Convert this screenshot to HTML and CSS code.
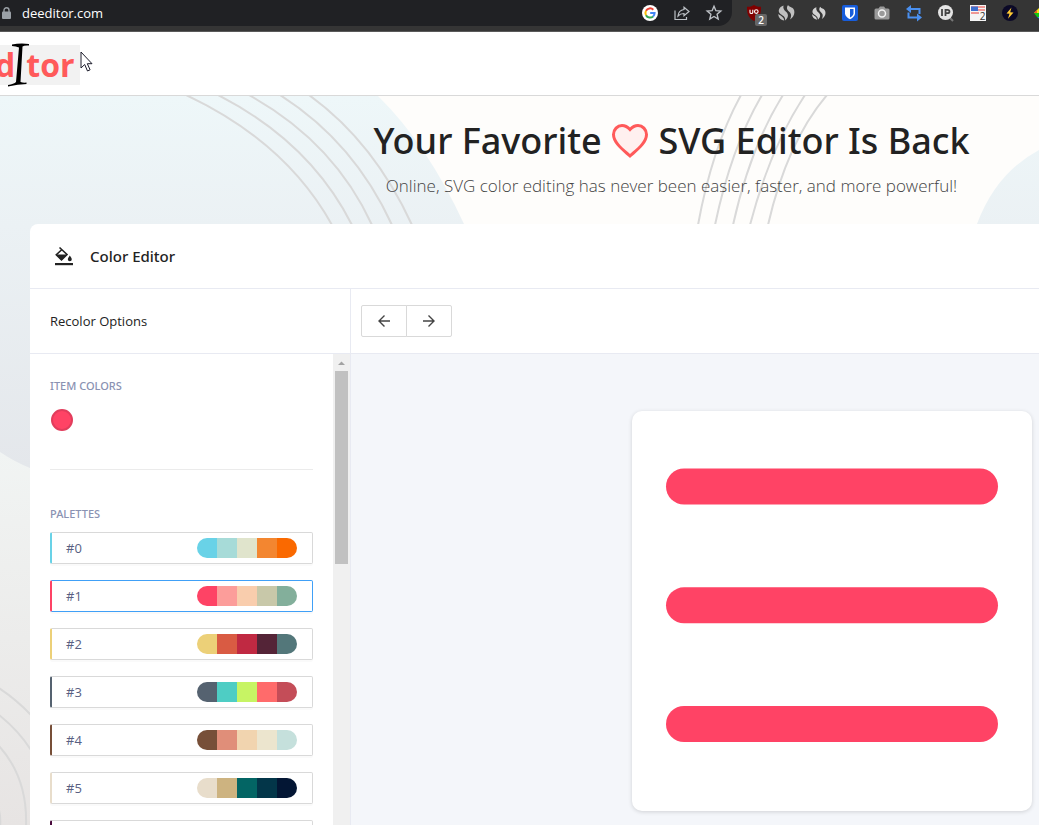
FILE: index.html
```html
<!DOCTYPE html>
<html lang="en">
<head>
<meta charset="utf-8">
<title>Deeditor</title>
<link rel="stylesheet" href="styles.css">
</head>
<body>
<div class="app">
  <div class="browser">
    <div class="omnibox">
      <svg class="lock" width="9" height="12" viewBox="0 0 9 12"><path d="M2 5V3.2a2.5 2.5 0 0 1 5 0V5" fill="none" stroke="#9aa0a6" stroke-width="1.4"/><rect y="4.500" width="9" height="7.500" rx="1" fill="#9aa0a6"/></svg>
      <input class="url" type="text" aria-label="Address" value="deeditor.com">
      <button class="tool" aria-label="Google"><svg width="18" height="18" viewBox="0 0 18 18"><circle cx="9" cy="9" r="8" fill="#fff"/><g fill="none" stroke-width="2"><path d="M12.300 5.700A4.600 4.600 0 0 0 5 6.800" stroke="#ea4335"/><path d="M5 6.800a4.600 4.600 0 0 0 0 4.400" stroke="#fbbc05"/><path d="M5 11.200a4.600 4.600 0 0 0 7.100 1.200" stroke="#34a853"/><path d="M12.100 12.400A4.600 4.600 0 0 0 13.600 9H9.200" stroke="#4285f4"/></g></svg></button>
      <button class="tool" aria-label="Share"><svg width="18" height="18" viewBox="0 0 18 18" fill="none" stroke="#bdc1c6" stroke-width="1.200"><path d="M2 6.500V15.500h11.500V13"/><path d="M11 3.200L16 7.500 11 11.800V9.500C8.500 9.500 6.500 10.200 5 12c.3-3.500 2.500-6 6-6.500z"/></svg></button>
      <button class="tool" aria-label="Bookmark"><svg width="18" height="18" viewBox="0 0 18 18" fill="none" stroke="#bdc1c6" stroke-width="1.400"><path d="M9 2.200l1.900 4.500 4.900.4-3.700 3.200 1.100 4.800L9 12.500l-4.200 2.600 1.100-4.800-3.700-3.200 4.900-.4z"/></svg></button>
    </div>
    <div class="extensions">
      <button class="tool" aria-label="Blocker"><svg width="18" height="18" viewBox="0 0 18 18"><path d="M9 1c2 1.300 4 1.800 7 1.800 0 7-1 10.700-7 14.200C3 13.500 2 9.800 2 2.800 5 2.800 7 2.300 9 1z" fill="#800000"/><g fill="none" stroke="#fff" stroke-width="1.100"><path d="M5 5.800v2.700q0 1 1.400 1t1.400-1V5.800"/><circle cx="11.300" cy="7.600" r="1.800"/></g></svg><span class="badge">2</span></button>
      <button class="tool" aria-label="Analytics"><svg width="18" height="18" viewBox="0 0 18 18" fill="#c0c0c0"><path d="M6.500 1.500C2 3 .5 7 3 9.500c2 2 5.500 2.500 5.200 7C12 13 11.500 10 9 7.800 7 6 5.800 4.500 6.500 1.500z"/><path d="M11 1C9 4 10 6 12.500 8c2 1.800 2 4.500.5 7.500 4-2.500 5.500-7 3.500-10.500C15 2.800 12.500 3.500 11 1z"/><path d="M1.200 10c.3 3.500 2.500 6 6 6.500C7 13 4 12 1.200 10z"/></svg></button>
      <button class="tool" aria-label="Rank"><svg width="15" height="15" viewBox="0 0 18 18" fill="#d2d2d2"><path d="M6.500 1.500C2 3 .5 7 3 9.500c2 2 5.500 2.500 5.200 7C12 13 11.500 10 9 7.800 7 6 5.800 4.500 6.500 1.500z"/><path d="M11 1C9 4 10 6 12.500 8c2 1.800 2 4.500.5 7.500 4-2.500 5.500-7 3.500-10.500C15 2.800 12.500 3.500 11 1z"/><path d="M1.200 10c.3 3.500 2.500 6 6 6.500C7 13 4 12 1.200 10z"/></svg></button>
      <button class="tool" aria-label="Passwords"><svg width="18" height="18" viewBox="0 0 18 18"><rect x="1" y="1" width="16" height="16" rx="2" fill="#175ddc"/><path d="M4 3.500h10v6c0 2.500-2.500 4.500-5 5.800-2.500-1.300-5-3.300-5-5.800z" fill="#fff"/><path d="M9 5h3.500v4.500c0 1.500-1.700 3-3.500 4z" fill="#175ddc"/></svg></button>
      <button class="tool" aria-label="Screenshot"><svg width="18" height="18" viewBox="0 0 18 18"><path d="M3 4.500h2.500L7 2.500h4l1.500 2H15a1.500 1.500 0 0 1 1.500 1.500v8A1.500 1.500 0 0 1 15 15.500H3A1.500 1.500 0 0 1 1.500 14V6A1.500 1.500 0 0 1 3 4.500z" fill="#9a9a9a"/><circle cx="9" cy="9.500" r="3.500" fill="none" stroke="#f2f2f2" stroke-width="1.500"/></svg></button>
      <button class="tool" aria-label="Swap"><svg width="18" height="18" viewBox="0 0 18 18"><path d="M4 5h10.500v5M14 13.500H3.500v-5" fill="none" stroke="#4a90f0" stroke-width="2"/><path d="M6 1v8L1 5zM12 9.500v8l5-4z" fill="#4a90f0"/></svg></button>
      <button class="tool" aria-label="IP lookup"><svg width="18" height="18" viewBox="0 0 18 18"><path d="M12 13l4 4" stroke="#777" stroke-width="2"/><circle cx="8.500" cy="8.500" r="7.500" fill="#e4e4e4"/><path d="M5 5v7M8.500 12V5.800h2q2 0 2 1.700t-2 1.700h-2" fill="none" stroke="#444" stroke-width="1.800"/></svg></button>
      <button class="tool" aria-label="Region"><svg width="18" height="18" viewBox="0 0 18 18"><path fill="#f5f5f5" d="M1 1h16v16H1z"/><path d="M2 3h14M2 6h14M2 9h14" stroke="#ee7a76" stroke-width="1.500"/><path fill="#3f6fd0" d="M2 2.500h7v4.500H2z"/></svg><span class="count">2</span></button>
      <button class="tool" aria-label="Lightning"><svg width="18" height="18" viewBox="0 0 18 18"><circle cx="9" cy="9" r="8" fill="#0b0927"/><path d="M10.500 3.500L5.500 9.500l3 .3-1.500 5 5.500-6.300-3.300-.3z" fill="#ffc933"/></svg></button>
      <button class="tool" aria-label="Colors"><svg width="18" height="18" viewBox="0 0 18 18"><path d="M1 9l8-8v8z" fill="#f5e610"/><path d="M1 9h8v4H4z" fill="#12c912"/><path d="M4 13h5v4z" fill="#12a0e8"/><path d="M1 9l3-3v3z" fill="#f0582a"/><path d="M9 1l8 8-8 8z" fill="#35c435"/></svg></button>
    </div>
  </div>

  <header class="site-header">
    <a class="logo" href="#" aria-label="editor">
      <span>d</span><svg class="logo-i" width="24" height="44" viewBox="0 0 24 44"><path d="M5 1.500q8-1.500 17-.5v1.500q-5-.3-6.500 1L13.500 39q3 1 6 .5V41Q11 41 1 43.500V42q6-1 8-3L12 4.500q-3-1.500-7-1.500z"/></svg><span>tor</span>
    </a>
  </header>

  <main class="hero">
    <svg class="backdrop" viewBox="0 0 1039 729" preserveAspectRatio="xMinYMin slice">
      <defs>
        <linearGradient id="ice" x1="0" y1="0" x2="0" y2="372" gradientUnits="userSpaceOnUse"><stop offset="0" stop-color="#eef7f9"/><stop offset=".35" stop-color="#ebf1f4"/><stop offset="1" stop-color="#e4e7eb"/></linearGradient>
        <linearGradient id="stone" x1="0" y1="355" x2="0" y2="729" gradientUnits="userSpaceOnUse"><stop offset="0" stop-color="#f1f4f3"/><stop offset="1" stop-color="#e7e4e3"/></linearGradient>
      </defs>
      <path fill="#fefdfb" d="M0 0h1039v729H0z"/>
      <path fill="url(#stone)" d="M0 300h400v429H0z"/>
      <path fill="url(#ice)" d="M0 0H378Q427 48 464 128L480 372H30Q15 366 0 356z"/>
      <path fill="url(#ice)" d="M977 128Q996 77 1039 54V300H977z"/>
      <g fill="none" stroke="#d9d9d9" stroke-width="2">
        <path d="M186-1Q286 46 332 129M218-1Q310 46 352 129M249-1Q334 46 372 129M280-1Q354 46 392 129M309-1Q374 46 412 129"/>
        <path d="M741-1Q712 52 698 129M762-1Q731 52 715 129M783-1Q750 52 733 129M805-1Q770 52 750 129M827-1Q787 46 768 129"/>
        <path d="M-1 592Q17 604 31 619M-1 619Q18 634 31 654M-1 650Q28 682 26 731M-1 714Q1 722 0 731"/>
      </g>
    </svg>

    <div class="intro">
      <h1 class="title">Your Favorite <svg class="heart" width="38" height="36" viewBox="0 0 38 36"><path d="M19 33C13 27.500 2.500 20 2.500 11.500 2.500 6.500 6.500 2.500 11 2.500c3.500 0 6 1.800 8 4 2-2.200 4.500-4 8-4 4.500 0 8.500 4 8.500 9C35.500 20 25 27.500 19 33z" fill="#fff0ef" stroke="#ff5a5a" stroke-width="3"/></svg> SVG Editor Is Back</h1>
      <p class="tagline">Online, SVG color editing has never been easier, faster, and more powerful!</p>
    </div>

    <section class="panel">
      <h2 class="panel-head"><svg width="20" height="20" viewBox="0 0 20 20"><path fill="#222" d="M1 17h18v2.200H1z"/><path d="M5.500 1.500l7.500 7L7.500 13.800 2.300 8.700 8 3.500" fill="none" stroke="#222" stroke-width="1.600"/><path fill="#222" d="M2.300 8.500h10.500L7.500 14.300zM15.800 9.500q2 2.700 2 3.800a2 2 0 0 1-4 0q0-1.100 2-3.800z"/></svg>Color Editor</h2>
      <div class="workspace">
        <aside class="sidebar">
          <h3 class="bar options">Recolor Options</h3>
          <div class="scroller">
            <div class="content">
              <h4 class="label">ITEM COLORS</h4>
              <button class="swatch" aria-label="Item color"></button>
              <hr class="divider">
              <h4 class="label">PALETTES</h4>
              <div class="palettes">
                <button class="palette" style="border-left-color:#69d2e7">#0<span class="chips"><i style="background:#69d2e7"></i><i style="background:#a7dbd8"></i><i style="background:#e0e4cc"></i><i style="background:#f38630"></i><i style="background:#fa6900"></i></span></button>
                <button class="palette selected" style="border-left-color:#fe4365">#1<span class="chips"><i style="background:#fe4365"></i><i style="background:#fc9d9a"></i><i style="background:#f9cdad"></i><i style="background:#c8c8a9"></i><i style="background:#83af9b"></i></span></button>
                <button class="palette" style="border-left-color:#ecd078">#2<span class="chips"><i style="background:#ecd078"></i><i style="background:#d95b43"></i><i style="background:#c02942"></i><i style="background:#542437"></i><i style="background:#53777a"></i></span></button>
                <button class="palette" style="border-left-color:#556270">#3<span class="chips"><i style="background:#556270"></i><i style="background:#4ecdc4"></i><i style="background:#c7f464"></i><i style="background:#ff6b6b"></i><i style="background:#c44d58"></i></span></button>
                <button class="palette" style="border-left-color:#774f38">#4<span class="chips"><i style="background:#774f38"></i><i style="background:#e08e79"></i><i style="background:#f1d4af"></i><i style="background:#ece5ce"></i><i style="background:#c5e0dc"></i></span></button>
                <button class="palette" style="border-left-color:#e8ddcb">#5<span class="chips"><i style="background:#e8ddcb"></i><i style="background:#cdb380"></i><i style="background:#036564"></i><i style="background:#033649"></i><i style="background:#031634"></i></span></button>
                <button class="palette" style="border-left-color:#490a3d" aria-label="Palette 6"></button>
              </div>
            </div>
            <div class="scrollbar"><svg width="17" height="17" viewBox="0 0 17 17"><path d="M5 11h7L8.500 7.500z" fill="#a3a3a3"/></svg><div class="thumb"></div></div>
          </div>
        </aside>
        <div class="stage">
          <div class="bar history">
            <button class="step" aria-label="Undo"><svg width="14" height="14" viewBox="0 0 14 14"><path d="M7.500 1.500L2 7l5.500 5.500M2 7h11"/></svg></button>
            <button class="step" aria-label="Redo"><svg width="14" height="14" viewBox="0 0 14 14"><path d="M6.500 1.500L12 7l-5.500 5.500M12 7H1"/></svg></button>
          </div>
          <div class="canvas">
            <div class="artboard"><svg width="400" height="400" viewBox="0 0 400 400" fill="#ff4365"><rect x="34" y="57.500" width="332" height="36" rx="18"/><rect x="34" y="176.300" width="332" height="36" rx="18"/><rect x="34" y="295" width="332" height="36" rx="18"/></svg></div>
          </div>
        </div>
      </div>
    </section>
  </main>
  <svg class="cursor" width="14" height="22" viewBox="0 0 14 22"><path d="M1 1v16l3.700-3.500L7.500 20l2.600-1.200-2.800-6.100H12z" fill="#fff" stroke="#1c1c2b"/></svg>
</div>
</body>
</html>
```
FILE: styles.css
```css
* { box-sizing: border-box; }

body {
  margin: 0;
  font-family: "Open Sans", "Noto Sans", sans-serif;
  font-size: 14px;
  color: #222;
}

button { font: inherit; padding: 0; cursor: pointer; }
svg { flex: none; }
h1, h2, h3, h4, p { margin: 0; }

.app {
  position: relative;
  display: flex;
  flex-direction: column;
  height: 100vh;
  overflow: hidden;
}

/* Browser toolbar */
.browser {
  flex: none;
  display: flex;
  height: 32px;
  padding-bottom: 5px;
  background: #353535;
  border-bottom: 1px solid #5a5a5a;
  overflow: hidden;
}
.omnibox {
  flex: 1;
  min-width: 0;
  display: flex;
  align-items: center;
  gap: 14px;
  padding-right: 9px;
  background: #202124;
  border-radius: 0 0 14px 0;
}
.lock { margin-left: 2px; }
.url {
  flex: 1;
  min-width: 0;
  margin-left: -3px;
  padding: 0;
  border: 0;
  background: none;
  color: #fff;
  font: 13px "Open Sans", sans-serif;
}
.tool {
  position: relative;
  flex: none;
  display: flex;
  align-items: center;
  justify-content: center;
  width: 18px;
  height: 18px;
  border: 0;
  background: none;
}
.extensions {
  flex: none;
  display: flex;
  align-items: center;
  gap: 14px;
  width: 307px;
  padding-left: 13px;
  overflow: hidden;
}
.badge {
  position: absolute;
  left: 10px;
  top: 10px;
  width: 12px;
  border-radius: 2px;
  background: #666;
  color: #fff;
  font-size: 10px;
  font-weight: 600;
  line-height: 12px;
}
.count {
  position: absolute;
  right: 1px;
  bottom: 1px;
  width: 7px;
  font-size: 10px;
  line-height: 9px;
  background: #f5f5f5;
  color: #333;
}

/* Site header */
.site-header {
  flex: none;
  display: flex;
  align-items: center;
  height: 64px;
  padding-top: 2px;
  border-bottom: 1px solid #d9d9d9;
  background: #fff;
}
.logo {
  display: flex;
  align-items: center;
  width: 80px;
  height: 40px;
  background: #f2f2f2;
  color: #ff5a5a;
  font-size: 32px;
  font-weight: 700;
  line-height: 40px;
  text-decoration: none;
}
.logo span:first-child { margin-left: -5px; }
.logo-i { margin: 0 -5px 0 -8px; z-index: 1; fill: #000; }
.cursor { position: absolute; left: 80px; top: 51px; }

/* Hero */
.hero {
  position: relative;
  flex: 1;
  min-height: 0;
  display: flex;
  flex-direction: column;
}
.backdrop {
  position: absolute;
  inset: 0;
  width: 100%;
  height: 100%;
}
.intro {
  position: relative;
  flex: none;
  height: 128px;
  padding: 18px 0 0 304px;
  text-align: center;
  white-space: nowrap;
}
.title {
  font-family: "Noto Sans", "Open Sans", sans-serif;
  font-size: 36px;
  font-weight: 500;
  line-height: 54px;
}
.heart { vertical-align: -5px; }
.tagline {
  font-size: 17px;
  font-weight: 300;
  line-height: 36px;
  color: #444;
}

/* Editor panel */
.panel {
  position: relative;
  flex: 1;
  min-height: 0;
  display: flex;
  flex-direction: column;
  margin-left: 30px;
  border-top-left-radius: 8px;
  background: #fff;
  overflow: hidden;
}
.panel-head {
  flex: none;
  display: flex;
  align-items: center;
  gap: 16px;
  height: 65px;
  padding-left: 24px;
  border-bottom: 1px solid #e8eaf2;
  font-family: "Noto Sans", "Open Sans", sans-serif;
  font-size: 15px;
  font-weight: 500;
}
.workspace { flex: 1; min-height: 0; display: flex; }
.sidebar {
  flex: none;
  display: flex;
  flex-direction: column;
  width: 321px;
  border-right: 1px solid #e8eaf2;
}
.bar {
  flex: none;
  display: flex;
  align-items: center;
  height: 65px;
  border-bottom: 1px solid #e8eaf2;
}
.options { padding-left: 20px; font-size: 13px; font-weight: 400; }
.scroller { flex: 1; min-height: 0; display: flex; overflow: hidden; }
.content { flex: 1; padding: 22px 20px 0; }
.label {
  font-family: "Noto Sans", "Open Sans", sans-serif;
  font-size: 11px;
  font-weight: 500;
  line-height: 20px;
  color: #8a92b2;
}
.swatch {
  display: block;
  width: 22px;
  height: 22px;
  margin: 13px 1px 0;
  border: 2px solid #e23d5c;
  border-radius: 50%;
  background: #ff4365;
}
.divider {
  margin: 38px 0 34px;
  border: 0;
  border-top: 1px solid #ebebeb;
}
.palettes {
  display: flex;
  flex-direction: column;
  gap: 16px;
  padding-top: 8px;
}
.palette {
  display: flex;
  align-items: center;
  justify-content: space-between;
  height: 32px;
  padding: 0 15px 0 14px;
  border: 1px solid #d9d9d9;
  border-left-width: 2px;
  border-radius: 2px;
  background: #fff;
  box-shadow: 0 2px 0 rgba(0, 0, 0, .02);
  color: #595f82;
  font-size: 13px;
}
.selected { border-color: #40a0f7; }
.chips {
  display: flex;
  width: 100px;
  height: 20px;
  border-radius: 10px;
  overflow: hidden;
}
.chips i { flex: 1; }
.scrollbar { flex: none; width: 17px; background: #f0f0f0; }
.scrollbar svg { display: block; }
.thumb { height: 193px; margin: 0 2px; background: #c1c1c1; }

/* Stage */
.stage { flex: 1; min-width: 0; display: flex; flex-direction: column; }
.history { padding-left: 10px; }
.step {
  display: flex;
  align-items: center;
  justify-content: center;
  width: 46px;
  height: 32px;
  border: 1px solid #d9d9d9;
  border-radius: 2px 0 0 2px;
  background: #fff;
}
.step + .step { margin-left: -1px; border-radius: 0 2px 2px 0; }
.step svg { fill: none; stroke: #444; stroke-width: 1.400; }
.canvas {
  flex: 1;
  display: flex;
  justify-content: flex-end;
  align-items: flex-start;
  padding: 57px 7px 0 0;
  background: #f4f6fa;
}
.artboard {
  display: flex;
  border-radius: 10px;
  background: #fff;
  box-shadow: 0 1px 4px rgba(0, 0, 0, .15);
}
```
